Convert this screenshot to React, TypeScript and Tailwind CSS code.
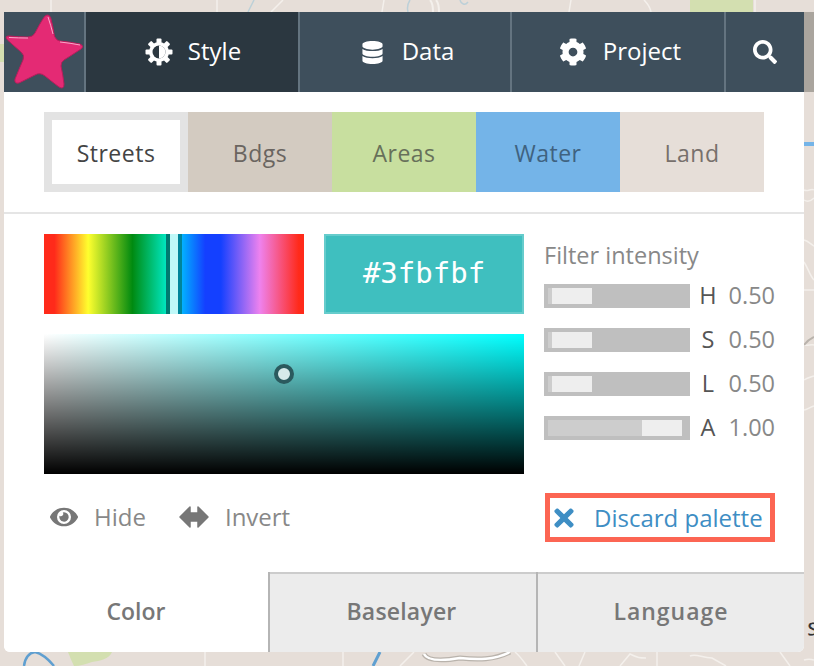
import { FaDatabase, FaCog, FaSearch, FaEye, FaTimes } from 'react-icons/fa';

const sans = "font-['Open_Sans','Noto_Sans',sans-serif]";

function MapBackground() {
  return (
    <svg className="absolute inset-0" width="814" height="666" viewBox="0 0 814 666" fill="none">
      <rect width="814" height="666" fill="#e6ded8" />
      <rect x="690" y="0" width="63" height="12" fill="#d3dfb0" />
      <rect x="0" y="44" width="4" height="18" fill="#d3dfb0" />
      <path d="M68 652h44c-3 7-12 9-20 10-6 2-12 4-18 4-2-4-4-9-6-14z" fill="#d3dfb0" />
      <rect x="804" y="12" width="10" height="80" fill="#aaa59e" />
      <path d="M24 666c1-8 5-13 11-14 8 2 14 8 19 14" stroke="#5f9fd0" strokeWidth="2.5" />
      <path d="M380 652l-7 14" stroke="#5f9fd0" strokeWidth="3" />
      <path d="M804 144h10" stroke="#74b4e8" strokeWidth="4" />
      <path d="M254 0l-6 12M410 0c-2 3-3 8-2 12M460 0c1 4 5 6 8 2" stroke="#bcd0d8" strokeWidth="1.5" />
      <path d="M424 654c4 8 24 6 36 4 18 2 34 2 50-6" stroke="#b9b3ac" strokeWidth="5" />
      <g stroke="#f4f0ec" strokeWidth="1.5">
        <path d="M51 0v12M217 0v12M283 0l-12 12M384 0l-2 12M571 0l-2 12M644 0c3 3 6 6 7 12M755 0v12" />
        <path d="M430 0c3 3 3 8 3 12M436 0c3 3 3 8 3 12" strokeWidth="2" />
        <path d="M205 652v14M343 652v14M400 666l14-14M515 652c5 4 9 10 12 14M555 652l10 14M585 652l-6 14M620 666l10-12c8 4 10 4 16 4M657 652v14M690 656c6-3 12 2 22 2l14 8M780 652l10 14" />
        <path d="M804 190c4 2 7-2 10 0M804 200c3 2 6 2 10-2M804 240c5 1 7 5 10 6M804 262c4 6 6 14 10 18M804 290h10M804 345c4 1 7-1 10 0M804 380c3-2 7-3 10-4M804 410c3 0 6-3 10-4M804 660c3-1 7-1 10 0" />
      </g>
      <path d="M424 654c4 8 24 6 36 4 18 2 34 2 50-6" stroke="#fff" strokeWidth="2.5" />
      <path d="M804 345c3-4 6-6 10-8" stroke="#b9b3ac" strokeWidth="2" />
      <text x="807" y="636" fontFamily="'Open Sans',sans-serif" fontWeight="700" fontSize="20" fill="#333" stroke="#fff" strokeWidth="0.5">S</text>
    </svg>
  );
}

// half-filled gear used by the Style tab
function StyleIcon() {
  const teeth = [0, 45, 90, 135, 180, 225, 270, 315];
  return (
    <svg width="28" height="28" viewBox="0 0 28 28" className="shrink-0">
      <circle cx="14" cy="14" r="10" fill="#fff" />
      {teeth.map((a) => (
        <rect key={a} x="11.5" y="0.5" width="5" height="6" rx="1" fill="#fff" transform={`rotate(${a} 14 14)`} />
      ))}
      <circle cx="14" cy="14" r="6.5" fill="#2b3740" />
      <path d="M14 7.500a6.500 6.500 0 0 1 0 13z" fill="#fff" />
    </svg>
  );
}

function NavItem({ icon, label, active, className }: { icon: React.ReactNode; label: string; active?: boolean; className: string }) {
  return (
    <div
      className={`flex h-full items-center justify-center text-[24px] font-medium text-white ${active ? 'bg-[#2b3740]' : ''} ${className}`}
    >
      {icon}
      <span className="pb-0.5">{label}</span>
    </div>
  );
}

function Slider({ letter, value, full }: { letter: string; value: string; full?: boolean }) {
  return (
    <div className="flex h-6 items-center">
      <div className="flex h-6 w-[146px] items-center bg-[#bfbfbf] px-1">
        {full ? (
          <div className="flex h-4 w-[134px] justify-end bg-[#cdcdcd]">
            <div className="h-4 w-10 bg-[#eeeeee]" />
          </div>
        ) : (
          <div className="flex h-4 w-11 justify-end bg-[#cdcdcd]">
            <div className="h-4 w-10 bg-[#eeeeee]" />
          </div>
        )}
      </div>
      <span className="w-9 pb-0.5 text-center text-[23.5px] leading-6 text-[#555]">{letter}</span>
      <span className="ml-auto pb-0.5 text-[23.5px] leading-6 text-[#888]">{value}</span>
    </div>
  );
}

export default function App() {
  return (
    <div className={`relative h-[666px] w-[814px] overflow-hidden ${sans}`}>
      <MapBackground />
      <div className="absolute left-1 top-3 flex h-[640px] w-[800px] flex-col overflow-hidden rounded-bl-md rounded-br-md bg-white">
        {/* Nav */}
        <div className="flex h-20 shrink-0 bg-[#3e4f5c]">
          <div className="relative w-20 shrink-0">
            <svg className="absolute left-0 top-0" width="84" height="80" viewBox="0 0 84 80">
              <path
                d="M39.500 6Q43 .5 46.500 5Q49 14 50 22Q51 28 56 29Q66 30 76 32Q80.500 34 77 37Q68 43 60 48Q57 50 57 54Q59 63 60 72Q60 78 55 75Q47 69 41 64Q36 60 31 63Q23 67 15 71Q10 72 11 67Q15 57 19 48Q21 43 17 40Q9 33 3.500 28Q0 24 5 24Q15 25 24 25Q29 25 31 21Q35 13 39.500 6Z"
                fill="#e42a74"
                stroke="#b81d5c"
                strokeWidth="1"
              />
              <path d="M5 25.500Q15 26 24 26M56 30Q66 31 76 33M44 5Q47 14 49 22" stroke="#f9a8c9" strokeWidth="1" fill="none" />
            </svg>
          </div>
          <div className="w-0.5 shrink-0 bg-[#647480]" />
          <NavItem active className="w-[212px] gap-[15px] pl-[2px]" label="Style" icon={<StyleIcon />} />
          <div className="w-0.5 shrink-0 bg-[#647480]" />
          <NavItem className="w-[210px] gap-[18px] pl-[5px]" label="Data" icon={<FaDatabase size={23} />} />
          <div className="w-0.5 shrink-0 bg-[#647480]" />
          <NavItem className="w-[212px] gap-4 pl-1" label="Project" icon={<FaCog size={28} />} />
          <div className="w-0.5 shrink-0 bg-[#647480]" />
          <div className="flex flex-1 items-center justify-center text-white">
            <FaSearch size={24} />
          </div>
        </div>

        {/* Swatches */}
        <div className="flex h-[122px] shrink-0 border-b-2 border-[#e5e5e5] px-10 pt-5">
          <div className="flex h-20 w-full text-[23px] leading-none tracking-[0.5px]">
            <div className="flex w-36 items-center justify-center border-8 border-[#e3e3e3] bg-white pt-0.5 text-[#444]">Streets</div>
            <div className="flex w-36 items-center justify-center bg-[#d3cbc1] pt-0.5 text-[#6a6560]">Bdgs</div>
            <div className="flex w-36 items-center justify-center bg-[#c8df9f] pt-0.5 text-[#67705a]">Areas</div>
            <div className="flex w-36 items-center justify-center bg-[#74b4e8] pt-0.5 text-[#3f6280]">Water</div>
            <div className="flex w-36 items-center justify-center bg-[#e6ded8] pt-0.5 text-[#77706c]">Land</div>
          </div>
        </div>

        {/* Color controls */}
        <div className="flex h-[358px] shrink-0 px-10 pt-5">
          <div className="w-[480px] shrink-0">
            <div className="flex gap-5">
              <div className="flex h-20 w-[260px] bg-[linear-gradient(to_right,#ff2a1a_0%,#ff2a1a_4%,#ffff2e_17%,#008a10_34%,#00e6c0_47%,#00e6c0_47%,#00bfff_52%,#1440ff_62%,#1440ff_68%,#ee82ee_83%,#ff2a1a_98%,#ff2a1a_100%)] pl-[122px]">
                <div className="h-20 w-1 bg-[#007a70]" />
                <div className="h-20 w-2 bg-[#bff8f8]" />
                <div className="h-20 w-1 bg-[#00859a]" />
              </div>
              <div className="flex h-20 w-[200px] items-center justify-center border-2 border-[#66cccc] bg-[#3fbfbf] font-['DejaVu_Sans_Mono',monospace] text-[29px] text-white">
                #3fbfbf
              </div>
            </div>
            <div className="relative mt-5 h-[140px] w-[480px] bg-[linear-gradient(to_top,#000,rgba(0,0,0,0)),linear-gradient(to_right,#fff,#0ff)]">
              <div className="absolute left-[230px] top-[30px] h-5 w-5 rounded-full border-4 border-[#2b5a5e] bg-[#d6eaea]" />
            </div>
            <div className="mt-[27px] flex h-8 items-center text-[24px] text-[#888]">
              <FaEye size={28} className="ml-[6px] text-[#777]" />
              <span className="ml-4">Hide</span>
              <svg width="30" height="24" viewBox="0 0 30 24" className="ml-[33px] shrink-0">
                <path d="M1 12L11 2V8H19V2L29 12L19 22V16H11V22Z" fill="#777" stroke="#777" strokeWidth="1.500" strokeLinejoin="round" />
              </svg>
              <span className="ml-[16px]">Invert</span>
            </div>
          </div>
          <div className="ml-5 flex min-w-0 flex-1 flex-col">
            <div className="h-[50px] w-[231px] whitespace-nowrap text-[23.5px] leading-[42px] text-[#888]">Filter intensity</div>
            <div className="flex w-[231px] flex-col gap-5">
              <Slider letter="H" value="0.50" />
              <Slider letter="S" value="0.50" />
              <Slider letter="L" value="0.50" />
              <Slider letter="A" value="1.00" full />
            </div>
            <div className="ml-px mt-[53px] flex h-[49px] w-[230px] items-center whitespace-nowrap border-[5px] border-[#fc6553] text-[24px] text-[#3e8ec4]">
              <FaTimes size={28} className="shrink-0" />
              <span className="ml-4">Discard palette</span>
            </div>
          </div>
        </div>

        {/* Bottom tabs */}
        <div className="flex h-20 shrink-0 text-[23px] font-semibold text-[#777]">
          <div className="flex w-[264px] items-center justify-center bg-white pb-0.5">Color</div>
          <div className="w-0.5 bg-[#b5b5b5]" />
          <div className="flex w-[266px] items-center justify-center border-t-2 border-[#ccc] bg-[#ececec] pb-[3px] pr-[3px] tracking-[0.2px]">Baselayer</div>
          <div className="w-0.5 bg-[#b5b5b5]" />
          <div className="flex flex-1 items-center justify-center border-t-2 border-[#ccc] bg-[#ececec] pb-[3px] tracking-[1px]">Language</div>
        </div>
      </div>
    </div>
  );
}
